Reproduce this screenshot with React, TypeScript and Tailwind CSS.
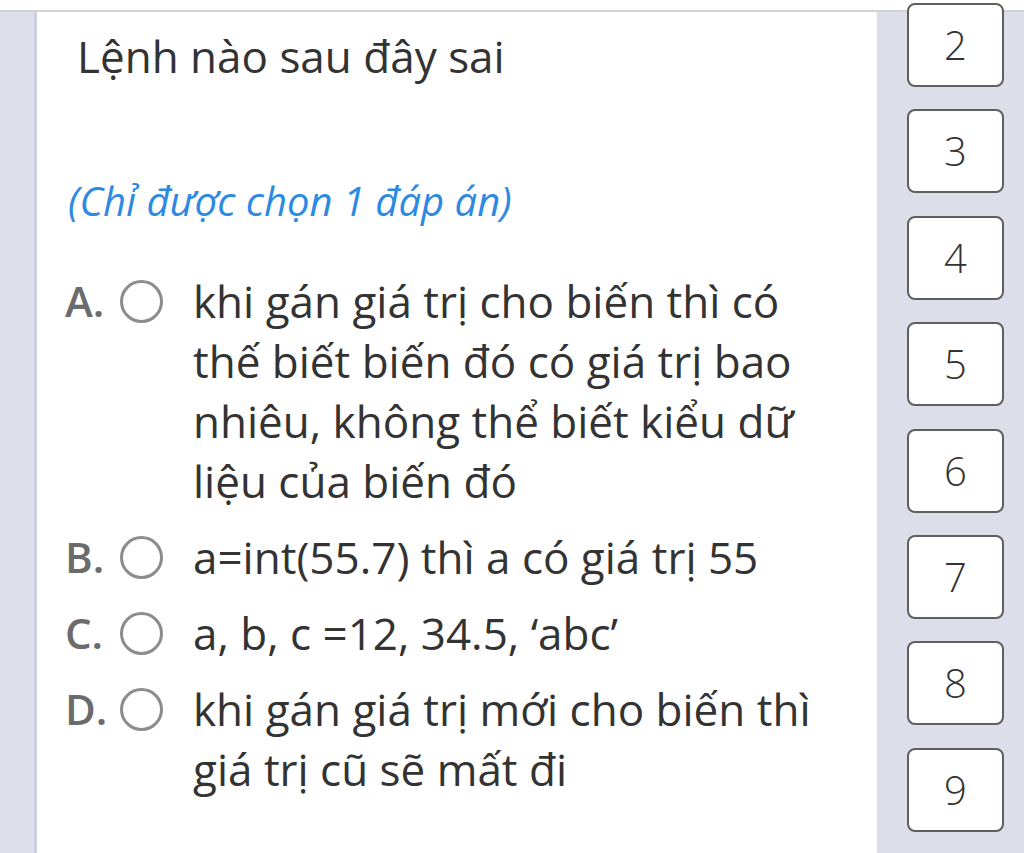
import { useState } from "react";

interface OptionProps {
  label: string;
  text: string;
}

const options: OptionProps[] = [
  { label: "A.", text: "khi gán giá trị cho biến thì có thế biết biến đó có giá trị bao nhiêu, không thể biết kiểu dữ liệu của biến đó" },
  { label: "B.", text: "a=int(55.7) thì a có giá trị 55" },
  { label: "C.", text: "a, b, c =12, 34.5, ‘abc’" },
  { label: "D.", text: "khi gán giá trị mới cho biến thì giá trị cũ sẽ mất đi" },
];

const Option = ({ label, text }: OptionProps) => {
  return (
    <div className="flex items-start">
      {/* Nhãn đáp án */}
      <span className="w-[55px] shrink-0 font-semibold text-[42px] text-[#6b6b6b]">{label}</span>
      {/* Nút radio */}
      <div className="h-[60px] flex items-center shrink-0">
        <span className="block w-[43px] h-[43px] rounded-full border-[3px] border-[#8c8c8c] bg-white"></span>
      </div>
      <p className="ml-[30px] w-[650px] text-[#333333]">{text}</p>
    </div>
  );
};

const App = () => {
  const [current] = useState(1);
  const numbers = [2, 3, 4, 5, 6, 7, 8, 9];

  return (
    <div
      className="w-[1024px] h-[853px] overflow-hidden bg-white flex flex-col"
      style={{ fontFamily: '"Open Sans", "Noto Sans", sans-serif' }}
    >
      {/* Thanh trên cùng */}
      <div className="h-[12px] shrink-0 bg-white border-b-2 border-[#d2d2d4]"></div>

      <div className="flex flex-1">
        {/* Cột trái */}
        <div className="w-[37px] shrink-0 bg-[#dde0ea] border-r-[3px] border-[#cdd0da]"></div>

        {/* Nội dung câu hỏi */}
        <div className="flex-1 bg-white rounded-bl-[10px] pl-[28px] pt-[14px] text-[44px] leading-[60px]">
          <h1 className="ml-[12px] text-[#333333]">Lệnh nào sau đây sai</h1>
          <p className="ml-[3px] mt-[85px] italic text-[40px] text-[#2d8ae2]">(Chỉ được chọn {current} đáp án)</p>

          <div className="mt-[40px] flex flex-col gap-[16px]">
            {options.map((o) => (
              <Option key={o.label} label={o.label} text={o.text} />
            ))}
          </div>
        </div>

        {/* Cột số câu */}
        <div className="w-[147px] shrink-0 bg-[#dcdfea]">
          <div className="-mt-[9px] pl-[30px] flex flex-col gap-[22.4px]">
            {numbers.map((n) => (
              <div
                key={n}
                className="w-[97px] h-[84px] bg-white border-2 border-[#5f5f5f] rounded-[8px] flex items-center justify-center text-[40px] font-light text-[#333333]"
              >
                {n}
              </div>
            ))}
          </div>
        </div>
      </div>
    </div>
  );
};

export default App;
